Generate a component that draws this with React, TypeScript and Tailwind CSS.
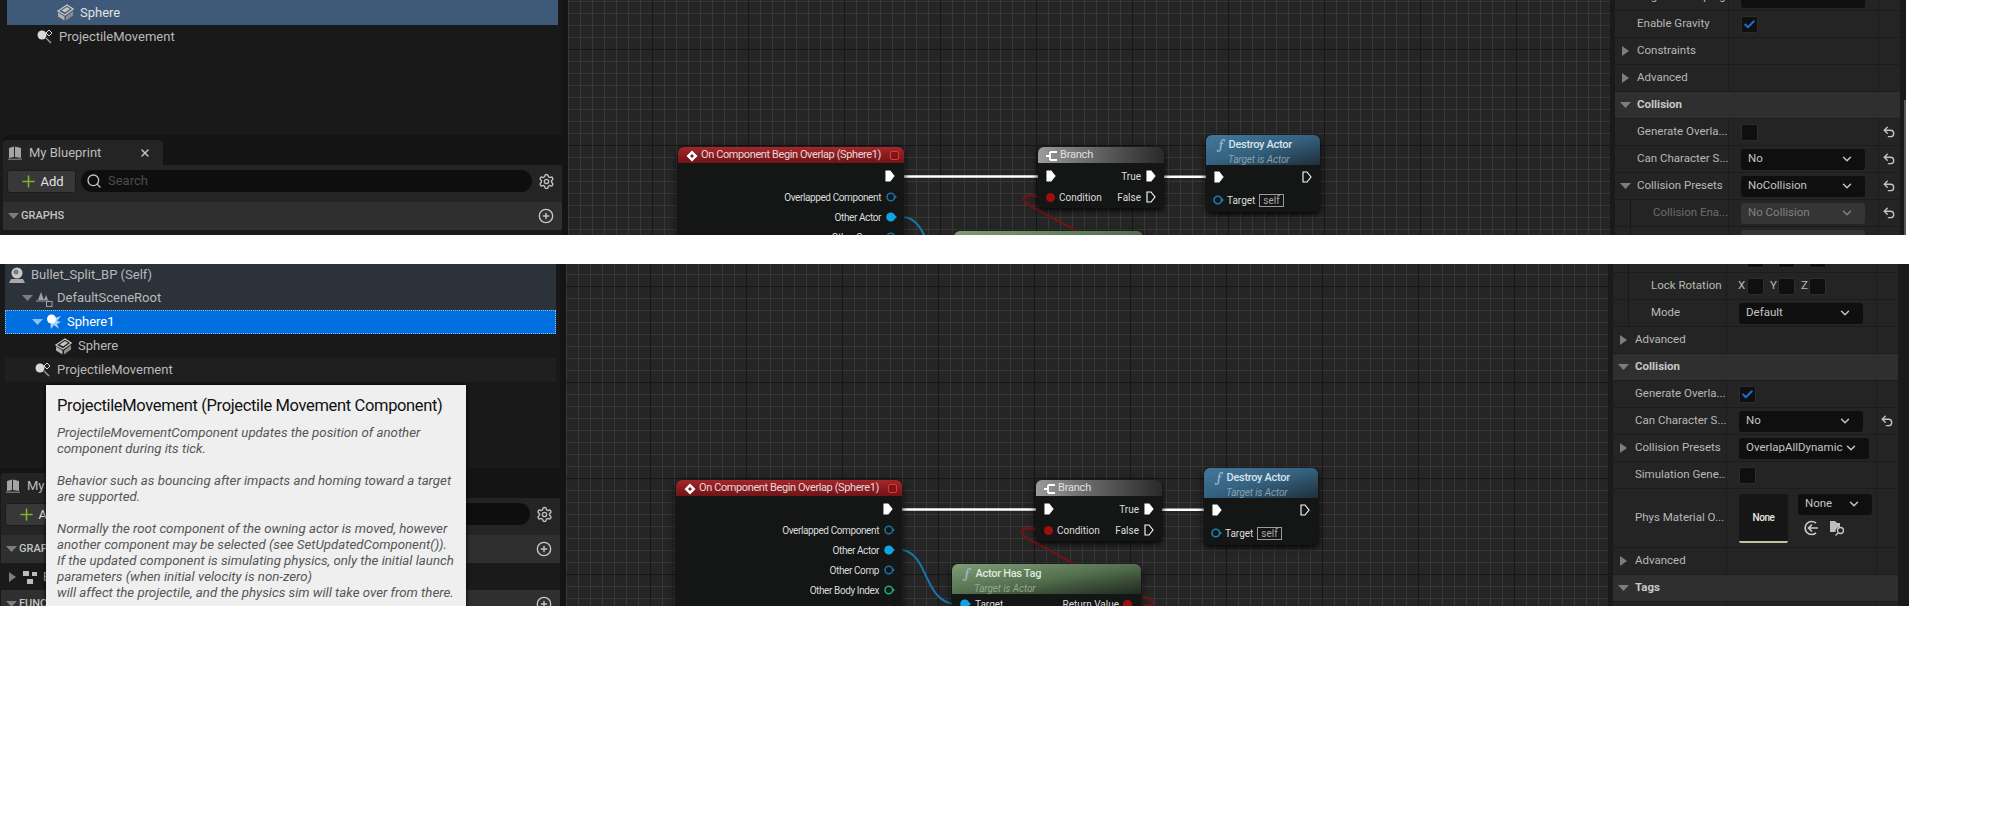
import type { ReactNode } from "react";
import { Check, ChevronDown, CirclePlus, Plus, Search, Settings, Undo2, X } from "lucide-react";

function TriRight() {
  return (
    <svg width="10" height="12" viewBox="0 0 10 12" className="shrink-0">
      <path d="M2 1 L9 6 L2 11 Z" fill="#7d7d7d" />
    </svg>
  );
}

function TriDown({ color = "#7d7d7d" }: { color?: string }) {
  return (
    <svg width="11" height="8" viewBox="0 0 11 8" className="shrink-0">
      <path d="M0 1 H11 L5.5 7 Z" fill={color} />
    </svg>
  );
}

function ActorIcon() {
  return (
    <svg width="18" height="18" viewBox="0 0 18 18" className="shrink-0">
      <circle cx="9" cy="7" r="5.5" fill="#c9c9c9" />
      <circle cx="8" cy="6" r="2.5" fill="#7b7b7b" />
      <path d="M3 13 H15 L17 17 H1 Z" fill="#a9a9a9" />
    </svg>
  );
}

function SceneRootIcon() {
  return (
    <svg width="17" height="17" viewBox="0 0 17 17" className="shrink-0">
      <path d="M5 2 L8 10 H2 Z M10 5 L12 10 H8 Z" fill="#a0a0a0" />
      <path d="M0 11 H13" stroke="#a0a0a0" strokeWidth="1" />
      <rect x="10.5" y="11.5" width="5.5" height="5" fill="none" stroke="#a0a0a0" strokeWidth="1" />
    </svg>
  );
}

function BurstIcon() {
  return (
    <svg width="15" height="16" viewBox="0 0 15 16" className="shrink-0">
      <path d="M9 4 L15 2 L11 7 L15 8 L11 10 L13 15 L8 11 L5 15 L4.5 10.5 Z" fill="#a9d3f5" />
      <circle cx="5.5" cy="5" r="4.5" fill="#ffffff" />
    </svg>
  );
}

function BoxIcon() {
  return (
    <svg width="17" height="17" viewBox="0 0 17 17" className="shrink-0">
      <path d="M1 7 L10 1 L16 5 L8 11 Z" fill="none" stroke="#c4c4c4" strokeWidth="1.4" />
      <path d="M4.5 6.5 L10 3 L13 5 L8 8.5 Z" fill="#c4c4c4" />
      <path d="M1 8.5 L7.5 12.5 V16.5 L1 12.5 Z" fill="#b0b0b0" />
      <path d="M9 12.5 L16 7 V11.5 L9 16.5 Z" fill="#8c8c8c" />
    </svg>
  );
}

function MovementIcon() {
  return (
    <svg width="16" height="16" viewBox="0 0 16 16" className="shrink-0">
      <circle cx="5" cy="6" r="4.5" fill="#d8d8d8" />
      <path d="M12 1 L15 4 L12 7 L9 4 Z" fill="none" stroke="#d8d8d8" strokeWidth="1" />
      <path d="M9 9 L14 14" stroke="#9a9a9a" strokeWidth="1.4" />
    </svg>
  );
}

function BookIcon() {
  return (
    <svg width="14" height="14" viewBox="0 0 14 14" className="shrink-0">
      <path d="M1 2 L6 0.5 V11 L1 12 Z M7 0.5 L13 2 V12 L7 11 Z" fill="#a5a5a5" />
      <path d="M0 12.5 H14 V14 H0 Z" fill="#6f6f6f" />
    </svg>
  );
}

function GraphIcon() {
  return (
    <svg width="14" height="14" viewBox="0 0 14 14" className="shrink-0">
      <path d="M0 1 H6 V6 H0 Z M9 2 H14 V6 H9 Z M4 9 H10 V14 H4 Z" fill="#bdbdbd" />
    </svg>
  );
}

function ExecPin({ filled = false }: { filled?: boolean }) {
  return (
    <svg width="10" height="12" viewBox="0 0 10 12" className="shrink-0">
      <path
        d="M1 1 H5 L9 6 L5 11 H1 Z"
        fill={filled ? "#ffffff" : "none"}
        stroke="#ffffff"
        strokeWidth="1.1"
      />
    </svg>
  );
}

function DataPin({ color, filled = false }: { color: string; filled?: boolean }) {
  return (
    <svg width="11" height="10" viewBox="0 0 11 10" className="shrink-0">
      <circle cx="4.8" cy="5" r="3.8" fill={filled ? color : "none"} stroke={color} strokeWidth="1.6" />
      <path d="M9 3.4 L11 5 L9 6.6 Z" fill={color} />
    </svg>
  );
}

function FuncMark() {
  return <span className="font-serif text-[15px] leading-none text-[#9fc0d6] italic">ƒ</span>;
}

function EventNode() {
  return (
    <div className="absolute top-[147px] left-[110px] h-[260px] w-[226px] rounded-md bg-[#141515] text-[10px] text-[#dcdcdc] shadow-[0_2px_6px_#000]">
      <div className="flex h-4 items-center gap-[3px] rounded-t-md bg-gradient-to-b from-[#a3262c] to-[#701417] pt-px pr-[5px] pl-2 text-[11px] tracking-[-0.4px] whitespace-nowrap text-[#e6d9d9]">
        <svg width="12" height="12" viewBox="0 0 12 12" className="shrink-0">
          <path d="M6 0.5 L11.5 6 L6 11.5 L0.5 6 Z M6 4 L4 6 L6 8 L8 6 Z" fill="#ffffff" fillRule="evenodd" />
        </svg>
        <span className="flex-1">On Component Begin Overlap (Sphere1)</span>
        <span className="h-[9px] w-[9px] rounded-[2px] border-[1.5px] border-[#e33] bg-[#7a1518]" />
      </div>
      <div className="mt-[3px] flex h-5 items-center justify-end pr-[9px]">
        <ExecPin filled />
      </div>
      <div className="mt-px flex flex-col items-end pr-[7px]">
        {[
          ["Overlapped Component", "#1d6f9f", false],
          ["Other Actor", "#12a3e6", true],
          ["Other Comp", "#1d6f9f", false],
          ["Other Body Index", "#1ba783", false],
          ["From Sweep", "#8c1616", true],
        ].map(([label, color, filled]) => (
          <div key={label as string} className="flex h-5 items-center gap-[5px] tracking-[-0.4px]">
            <span>{label as string}</span>
            <DataPin color={color as string} filled={filled as boolean} />
          </div>
        ))}
      </div>
    </div>
  );
}

function BranchNode() {
  return (
    <div className="absolute top-[147px] left-[470px] h-[61px] w-[126px] rounded-md bg-[#141515] text-[10px] text-[#dcdcdc] shadow-[0_2px_6px_#000]">
      <div className="flex h-4 items-center gap-[2px] rounded-t-md bg-gradient-to-r from-[#9b9b9b] to-[#2a2a2a] pt-px pl-2 text-[11px] tracking-[-0.2px] text-[#e0e0e0]">
        <svg width="12" height="12" viewBox="0 0 12 12" className="shrink-0">
          <path d="M0 6 H4 M4 2 V10 M4 2 H11 M4 10 H11" stroke="#ffffff" strokeWidth="1.8" fill="none" />
        </svg>
        <span>Branch</span>
      </div>
      <div className="mt-[3px] flex h-5 items-center justify-between pr-[8px] pl-[8px]">
        <ExecPin filled />
        <span className="flex items-center gap-[5px]">
          True <ExecPin filled />
        </span>
      </div>
      <div className="mt-px flex h-5 items-center justify-between pr-[8px] pl-[8px]">
        <span className="flex items-center gap-[4px]">
          <span className="h-[9px] w-[9px] rounded-full bg-[#a00f0f]" /> Condition
        </span>
        <span className="flex items-center gap-[5px]">
          False <ExecPin />
        </span>
      </div>
    </div>
  );
}

function DestroyNode() {
  return (
    <div className="absolute top-[135px] left-[638px] h-[77px] w-[114px] rounded-md bg-[#141515] text-[10px] text-[#dcdcdc] shadow-[0_2px_6px_#000]">
      <div className="h-[30px] rounded-t-md bg-gradient-to-br from-[#43789b] via-[#34617f] to-[#1f2f3b] pl-3">
        <div className="flex items-center gap-[4px] pt-[2px] text-[11px] leading-[14px] font-medium tracking-[-0.3px] text-[#d7e2e9]">
          <FuncMark />
          Destroy Actor
        </div>
        <div className="pt-px pl-[10px] text-[10px] leading-[13px] tracking-[-0.1px] text-[#86a0b1] italic">Target is Actor</div>
      </div>
      <div className="flex h-[24px] items-center justify-between pr-[8px] pl-[8px]">
        <ExecPin filled />
        <ExecPin />
      </div>
      <div className="mt-px flex h-[20px] items-center gap-[3px] pl-[7px]">
        <DataPin color="#1d7fb5" />
        <span>Target</span>
        <span className="ml-px border border-[#9a9a9a] px-[3px] leading-[11px] text-[#a9a9a9]">self</span>
      </div>
    </div>
  );
}

function HasTagNode() {
  return (
    <div className="absolute top-[231px] left-[386px] h-[100px] w-[189px] rounded-md bg-[#141515] text-[10px] text-[#dcdcdc] shadow-[0_2px_6px_#000]">
      <div className="h-[30px] rounded-t-md bg-gradient-to-br from-[#7f9f77] via-[#55704f] to-[#1f2a1f] pl-3">
        <div className="flex items-center gap-[5px] pt-[2px] text-[11px] leading-[14px] font-medium tracking-[-0.3px] text-[#dfe8db]">
          <FuncMark />
          Actor Has Tag
        </div>
        <div className="pt-px pl-[10px] text-[10px] leading-[13px] tracking-[-0.1px] text-[#93a98c] italic">Target is Actor</div>
      </div>
      <div className="flex h-5 items-center justify-between pr-[9px] pl-2">
        <span className="flex items-center gap-[4px]">
          <DataPin color="#12a3e6" filled /> Target
        </span>
        <span className="flex items-center gap-[4px]">
          Return Value <span className="h-[9px] w-[9px] rounded-full bg-[#a00f0f]" />
        </span>
      </div>
    </div>
  );
}

function Graph({ grid, shift }: { grid: string; shift: string }) {
  return (
    <div className={`relative min-w-0 flex-1 overflow-hidden bg-[#252525] bg-[linear-gradient(to_right,#161616_1px,transparent_1px),linear-gradient(to_bottom,#161616_1px,transparent_1px),linear-gradient(to_right,#383838_1px,transparent_1px),linear-gradient(to_bottom,#383838_1px,transparent_1px)] bg-size-[96px_96px,96px_96px,12px_12px,12px_12px] ${grid}`}>
      <div className={`relative ${shift}`}>
        <svg width="1100" height="420" className="absolute top-0 left-0 overflow-visible">
          <path d="M336 176.5 H470" stroke="#ffffff" strokeWidth="2.6" fill="none" />
          <path d="M596 176.7 H638" stroke="#ffffff" strokeWidth="2.6" fill="none" />
          <path d="M336 217 C362 220 358 268 388 271" stroke="#1678a8" strokeWidth="2" fill="none" />
          <path d="M472 197 C455 192 452 200 461 205 L512 233 M574 262 L584 266 C590 270 586 274 574 272" stroke="#6e1517" strokeWidth="2.4" fill="none" />
        </svg>
        <EventNode />
        <HasTagNode />
        <BranchNode />
        <DestroyNode />
      </div>
    </div>
  );
}

function Blueprint() {
  return (
    <div className="shrink-0 bg-[#141414] pt-[5px] text-[#bdbdbd]">
      <div className="flex h-[25px] w-[160px] items-center rounded-t bg-[#242424] pr-[12px] pl-[5px] text-[13px]">
        <BookIcon />
        <span className="ml-[7px] flex-1">My Blueprint</span>
        <X size={12} strokeWidth={3} className="text-[#c4c4c4]" />
      </div>
      <div className="flex h-[37px] items-start gap-[5px] bg-[#242424] pt-[5px] pl-[4px]">
        <button className="flex h-[23px] w-[69px] items-center justify-center gap-[2px] rounded-[3px] border border-[#1c1c1c] bg-[#383838] text-[13px] text-[#e2e2e2]">
          <Plus size={19} className="text-[#7fb22f]" />
          Add
        </button>
        <div className="flex h-[22px] w-[451px] items-center gap-[6px] rounded-full bg-[#0e0e0e] pl-[5px] text-[13px] text-[#4c4c4c]">
          <Search size={16} className="text-[#c4c4c4]" />
          Search
        </div>
        <Settings size={17} className="mt-[3px] ml-px text-[#c0c0c0]" />
      </div>
      <div className="flex h-[28px] items-center bg-[#2f2f2f] pr-[8px] pl-[5px] text-[11px] font-medium text-[#c4c4c4]">
        <TriDown />
        <span className="ml-[2px] flex-1">GRAPHS</span>
        <CirclePlus size={16} className="text-[#c8c8c8]" />
      </div>
      <div className="flex h-[27px] items-center gap-[6px] bg-[#1a1a1a] pl-[6px] text-[13px]">
        <TriRight />
        <GraphIcon />
        EventGraph
      </div>
      <div className="flex h-[28px] items-center bg-[#2f2f2f] pr-[8px] pl-[5px] text-[11px] font-medium text-[#c4c4c4]">
        <TriDown />
        <span className="ml-[2px] flex-1">FUNCTIONS</span>
        <CirclePlus size={16} className="text-[#c8c8c8]" />
      </div>
    </div>
  );
}

function TreeRow({ className, children }: { className: string; children: ReactNode }) {
  return <div className={`mr-[4px] ml-[4px] flex items-center text-[13px] ${className}`}>{children}</div>;
}

function SphereRow({ className }: { className: string }) {
  return (
    <TreeRow className={`h-6 gap-[6px] pl-[50px] ${className}`}>
      <BoxIcon />
      Sphere
    </TreeRow>
  );
}

function MovementRow({ className }: { className: string }) {
  return (
    <TreeRow className={`h-6 gap-[6px] pl-[30px] text-[#b9b9b9] ${className}`}>
      <MovementIcon />
      ProjectileMovement
    </TreeRow>
  );
}

function Dropdown({ label, width = "w-[124px]", dim = false }: { label: string; width?: string; dim?: boolean }) {
  return (
    <div className={`flex h-[21px] items-center justify-between rounded-[3px] pr-[11px] pl-[7px] text-[11.5px] ${width} ${dim ? "bg-[#353535] text-[#808080]" : "bg-[#0f0f0f] text-[#c4c4c4]"}`}>
      <span>{label}</span>
      <ChevronDown size={14} strokeWidth={2.5} />
    </div>
  );
}

function CheckBox({ checked = false }: { checked?: boolean }) {
  return (
    <div className="flex h-[17px] w-[17px] shrink-0 items-center justify-center rounded-[2px] border border-[#2c2c2c] bg-[#0f0f0f]">
      {checked && <Check size={13} strokeWidth={3.5} className="text-[#1c6fd8]" />}
    </div>
  );
}

type PropRowProps = {
  label: string;
  arrow?: "right" | "down";
  indent?: boolean;
  dim?: boolean;
  reset?: boolean;
  header?: boolean;
  className?: string;
  children?: ReactNode;
};

function PropRow({ label, arrow, indent, dim, reset, header, className = "h-[27px]", children }: PropRowProps) {
  if (header) {
    return (
      <div className="flex h-[27px] items-center gap-[6px] border-b border-[#1c1c1c] bg-[#2f2f2f] pl-[5px] text-[11.5px] font-bold text-[#c8c8c8]">
        <TriDown />
        {label}
      </div>
    );
  }
  return (
    <div className={`grid grid-cols-[113px_150px_22px] border-b border-[#1c1c1c] bg-[#242424] text-[11.5px] ${className}`}>
      <div className={`flex min-w-0 items-center whitespace-nowrap ${indent ? "ml-[15px] border-l border-[#181818] pl-[22px]" : "pl-[5px]"} ${dim ? "text-[#6c6c6c]" : "text-[#b8b8b8]"}`}>
        {!indent && <span className="flex w-[17px] shrink-0">{arrow === "right" ? <TriRight /> : arrow === "down" ? <TriDown /> : null}</span>}
        {label}
      </div>
      <div className="flex items-center border-l border-[#1c1c1c] pl-[12px] text-[#b8b8b8]">{children}</div>
      <div className="flex items-center justify-center border-l border-[#1c1c1c] pr-[2px]">
        {reset && <Undo2 size={14} strokeWidth={2.4} className="text-[#c4c4c4]" />}
      </div>
    </div>
  );
}

function LockBoxes() {
  return (
    <div className="flex items-center">
      <span className="-ml-[1px] mr-[1px] w-[8px]">X</span>
      <CheckBox />
      <span className="ml-[6px] w-[8px]">Y</span>
      <CheckBox />
      <span className="ml-[6px] w-[8px]">Z</span>
      <CheckBox />
    </div>
  );
}

function TopShot() {
  return (
    <section className="relative flex h-[235px] w-[1906px] overflow-hidden bg-[#191919]">
      <aside className="flex w-[568px] shrink-0 flex-col border-r-[6px] border-[#141414] pl-[3px] text-[#bcbcbc]">
        <div className="h-[135px] shrink-0">
          <SphereRow className="h-[25px] bg-[#3f5a78] text-[#e2e2e2]" />
          <MovementRow className="" />
        </div>
        <Blueprint />
      </aside>
      <Graph grid="bg-position-[84px_49px]" shift="mt-0" />
      <aside className="w-[296px] shrink-0 border-l-[5px] border-[#1a1a1a] bg-[#1a1a1a]">
        <div className="w-[285px]">
          <PropRow label="Angular Damping" className="-mt-[16px] h-[27px]">
            <div className="h-[21px] w-[124px] rounded-[3px] bg-[#0f0f0f]" />
          </PropRow>
          <PropRow label="Enable Gravity">
            <CheckBox checked />
          </PropRow>
          <PropRow label="Constraints" arrow="right" />
          <PropRow label="Advanced" arrow="right" />
          <PropRow label="Collision" header />
          <PropRow label="Generate Overla..." reset>
            <CheckBox />
          </PropRow>
          <PropRow label="Can Character S..." reset>
            <Dropdown label="No" />
          </PropRow>
          <PropRow label="Collision Presets" arrow="down" reset>
            <Dropdown label="NoCollision" />
          </PropRow>
          <PropRow label="Collision Ena..." indent dim reset>
            <Dropdown label="No Collision" dim />
          </PropRow>
          <PropRow label="Object Type" indent dim>
            <Dropdown label="WorldDynamic" dim />
          </PropRow>
        </div>
      </aside>
      <div className="absolute top-[100px] left-[1904px] h-[135px] w-[2px] bg-[#585858]" />
    </section>
  );
}

function BottomShot() {
  return (
    <section className="relative mt-[29px] flex h-[342px] w-[1909px] overflow-hidden bg-[#191919]">
      <aside className="flex w-[566px] shrink-0 flex-col border-r-[6px] border-[#141414] pl-[1px] text-[#bcbcbc]">
        <div className="h-[204px] shrink-0">
          <TreeRow className="h-[22px] gap-[5px] bg-[#2c323a] pl-[3px] text-[#b9b9b9]">
            <ActorIcon />
            Bullet_Split_BP (Self)
          </TreeRow>
          <TreeRow className="h-6 bg-[#2c323a] pl-[17px] text-[#b9b9b9]">
            <TriDown />
            <span className="mr-[4px] ml-[3px]">
              <SceneRootIcon />
            </span>
            DefaultSceneRoot
          </TreeRow>
          <TreeRow className="h-6 border border-dotted border-[#8fc1ee] bg-[#0070e0] pl-[26px] text-white">
            <TriDown color="#8fc1ee" />
            <span className="mr-[6px] ml-[3px]">
              <BurstIcon />
            </span>
            Sphere1
          </TreeRow>
          <SphereRow className="text-[#b9b9b9]" />
          <MovementRow className="bg-[#1f1f1f]" />
        </div>
        <Blueprint />
      </aside>
      <Graph grid="bg-position-[84px_22px]" shift="mt-[69px]" />
      <aside className="w-[301px] shrink-0 border-l-[5px] border-[#1a1a1a] bg-[#1a1a1a]">
        <div className="w-[285px]">
          <PropRow label="Lock Position" indent className="-mt-[18px] h-[27px]">
            <LockBoxes />
          </PropRow>
          <PropRow label="Lock Rotation" indent>
            <LockBoxes />
          </PropRow>
          <PropRow label="Mode" indent>
            <Dropdown label="Default" />
          </PropRow>
          <PropRow label="Advanced" arrow="right" />
          <PropRow label="Collision" header />
          <PropRow label="Generate Overla...">
            <CheckBox checked />
          </PropRow>
          <PropRow label="Can Character S..." reset>
            <Dropdown label="No" />
          </PropRow>
          <PropRow label="Collision Presets" arrow="right">
            <Dropdown label="OverlapAllDynamic" width="w-[130px]" />
          </PropRow>
          <PropRow label="Simulation Gene...">
            <CheckBox />
          </PropRow>
          <PropRow label="Phys Material O..." className="h-[59px]">
            <div className="flex items-start gap-[10px]">
              <div className="flex h-[49px] w-[49px] items-center justify-center rounded-[2px] border-b-2 border-[#c9c4a0] bg-[#161616] text-[10px] font-medium tracking-[-0.4px] text-[#e6e6e6]">
                None
              </div>
              <div className="flex flex-col gap-[5px]">
                <Dropdown label="None" width="w-[74px]" />
                <div className="flex items-center gap-[10px] pl-[5px]">
                  <svg width="16" height="16" viewBox="0 0 16 16">
                    <path d="M13 3.2 A6.5 6.5 0 1 0 13 12.8" fill="none" stroke="#c8c8c8" strokeWidth="1.7" />
                    <path d="M15 8 H6 M9 4.5 L5.5 8 L9 11.5" fill="none" stroke="#c8c8c8" strokeWidth="1.7" />
                  </svg>
                  <svg width="17" height="16" viewBox="0 0 17 16">
                    <path d="M1 1 H6 L8 3 H11 V7 A4.5 4.5 0 0 0 6.5 12 H1 Z" fill="#bdbdbd" />
                    <circle cx="11.5" cy="10.5" r="3" fill="none" stroke="#c8c8c8" strokeWidth="1.3" />
                    <path d="M9 13 L6.5 15.5" stroke="#c8c8c8" strokeWidth="1.3" />
                  </svg>
                </div>
              </div>
            </div>
          </PropRow>
          <PropRow label="Advanced" arrow="right" />
          <PropRow label="Tags" header />
          <PropRow label="" />
        </div>
      </aside>
      <div className="absolute top-[121px] left-[46px] h-[240px] w-[420px] bg-[#efefef] pt-[10px] pl-[11px] shadow-[0_0_4px_#000]">
        <h3 className="text-[16.5px] leading-[22px] tracking-[-0.35px] text-[#111111]">ProjectileMovement (Projectile Movement Component)</h3>
        <p className="mt-[8px] text-[13.25px] leading-[16px] whitespace-pre text-[#555555] italic">
          {"ProjectileMovementComponent updates the position of another\ncomponent during its tick.\n\nBehavior such as bouncing after impacts and homing toward a target\nare supported.\n\nNormally the root component of the owning actor is moved, however\nanother component may be selected (see SetUpdatedComponent()).\nIf the updated component is simulating physics, only the initial launch\nparameters (when initial velocity is non-zero)\nwill affect the projectile, and the physics sim will take over from there."}
        </p>
      </div>
    </section>
  );
}

export default function App() {
  return (
    <main className="h-[832px] w-[2008px] overflow-hidden bg-white font-[Roboto,sans-serif]">
      <TopShot />
      <BottomShot />
    </main>
  );
}
